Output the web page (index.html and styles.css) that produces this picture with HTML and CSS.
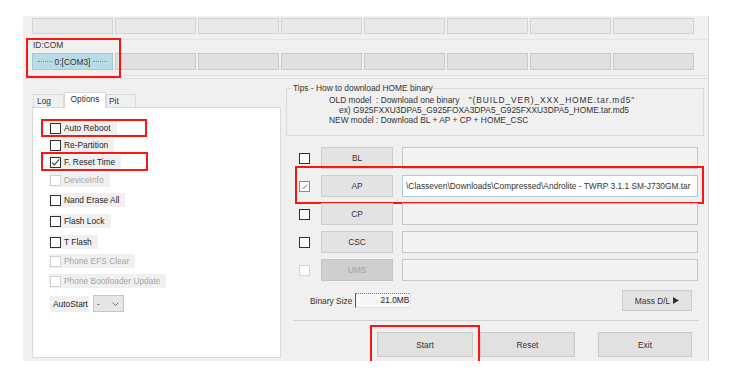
FILE: index.html
```html
<!DOCTYPE html>
<html>
<head>
<meta charset="utf-8">
<title>Odin</title>
<link rel="stylesheet" href="styles.css">
</head>
<body>
<div class="app">
  <div class="ports">
    <div class="slots top">
      <div class="slot"></div><div class="slot"></div><div class="slot"></div><div class="slot"></div>
      <div class="slot"></div><div class="slot"></div><div class="slot"></div><div class="slot"></div>
    </div>
    <div class="divider"></div>
    <div class="idcom">
      <div class="idlabel">ID:COM</div>
      <div class="slots bottom">
        <div class="slot com"><span>0:[COM3]</span></div>
        <div class="slot"></div><div class="slot"></div><div class="slot"></div>
        <div class="slot"></div><div class="slot"></div><div class="slot"></div><div class="slot"></div>
      </div>
      <div class="mark mark-id"></div>
    </div>
  </div>

  <div class="main">
    <div class="left">
      <div class="tabs">
        <div class="tab tab-log">Log</div>
        <div class="tab tab-options active">Options</div>
        <div class="tab tab-pit">Pit</div>
      </div>
      <div class="panel">
        <div class="opt"><span class="cb"></span><span>Auto Reboot</span><div class="mark mark-reboot"></div></div>
        <div class="opt"><span class="cb"></span><span>Re-Partition</span></div>
        <div class="opt"><span class="cb"><svg viewBox="0 0 9 9" width="9" height="9"><polyline points="1.2,4.6 3.4,7 8.2,1.4" fill="none" stroke="#333" stroke-width="1.1"/></svg></span><span>F. Reset Time</span><div class="mark mark-reset"></div></div>
        <div class="opt disabled"><span class="cb"></span><span>DeviceInfo</span></div>
        <div class="opt"><span class="cb"></span><span>Nand Erase All</span></div>
        <div class="opt"><span class="cb"></span><span>Flash Lock</span></div>
        <div class="opt"><span class="cb"></span><span>T Flash</span></div>
        <div class="opt disabled"><span class="cb"></span><span>Phone EFS Clear</span></div>
        <div class="opt disabled"><span class="cb"></span><span>Phone Bootloader Update</span></div>
        <div class="autostart">
          <span class="as-label">AutoStart</span>
          <div class="select"><span>-</span><svg width="7" height="4" viewBox="0 0 7 4"><polyline points="0.5,0.5 3.5,3.5 6.5,0.5" fill="none" stroke="#666" stroke-width="0.9"/></svg></div>
        </div>
      </div>
    </div>

    <div class="right">
      <fieldset class="tips">
        <legend>Tips - How to download HOME binary</legend>
        <div class="tips-lines">
          <div>OLD model  : Download one binary    <span class="quoted">"(BUILD_VER)_XXX_HOME.tar.md5"</span></div>
          <div class="ex">ex) G925FXXU3DPA5_G925FOXA3DPA5_G925FXXU3DPA5_HOME.tar.md5</div>
          <div>NEW model : Download BL + AP + CP + HOME_CSC</div>
        </div>
      </fieldset>

      <div class="files">
        <div class="frow"><span class="cb"></span><div class="fbtn">BL</div><div class="field"></div></div>
        <div class="frow"><span class="cb soft"><svg viewBox="0 0 9 9" width="7" height="7"><polyline points="1.2,4.8 3.4,7 8,2" fill="none" stroke="#555" stroke-width="1"/></svg></span><div class="fbtn">AP</div><div class="field focus">\Classeven\Downloads\Compressed\Androlite - TWRP 3.1.1 SM-J730GM.tar</div><div class="mark mark-ap"></div></div>
        <div class="frow"><span class="cb"></span><div class="fbtn">CP</div><div class="field"></div></div>
        <div class="frow"><span class="cb"></span><div class="fbtn">CSC</div><div class="field"></div></div>
        <div class="frow"><span class="cb off"></span><div class="fbtn off">UMS</div><div class="field"></div></div>
      </div>

      <div class="binrow">
        <span class="binlabel">Binary Size</span>
        <div class="binfield">21.0MB</div>
        <div class="massbtn">Mass D/L <svg width="6" height="7" viewBox="0 0 6 7"><polygon points="0,0 6,3.5 0,7" fill="#333"/></svg></div>
      </div>

      <div class="sep"></div>

      <div class="actions">
        <div class="abtn start">Start<div class="mark mark-start"></div></div>
        <div class="abtn reset">Reset</div>
        <div class="abtn exit">Exit</div>
      </div>
    </div>
  </div>
</div>
</body>
</html>
```

FILE: styles.css
```css
* { box-sizing: border-box; }
html, body { margin: 0; padding: 0; background: #fff; }
body {
  font-family: "Liberation Sans", Arial, sans-serif;
  font-size: 8.4px;
  color: #262626;
}

.app {
  margin: 16px 0 0 23px;
  width: 686px;
  height: 345px;
  background: #f0f0f0;
  border-right: 1px solid #d6d6d6;
}

/* ---------- port slots ---------- */
.ports {
  padding: 2px 0 5px 9px;
  border-bottom: 4px double #e1e1e1;
}
.slots { display: flex; gap: 2px; }
.slot {
  width: 81px;
  border: 1px solid #d3d3d3;
  background: #e9e9e9;
}
.slots.top .slot { height: 16px; }
.divider {
  margin: 5px 0 0 -7px;
  height: 1px;
  background: #e3e3e3;
}
.idcom { position: relative; }
.idlabel {
  height: 11px;
  line-height: 11px;
  margin-bottom: 2px;
  padding-left: 1px;
  color: #333;
}
.slots.bottom .slot {
  height: 17px;
  background: #e0e0e0;
  border-color: #cacaca;
}
.slots.bottom .slot.com {
  background: #b9dbe6;
  border-color: #a4c8d4;
  display: flex;
  align-items: center;
  gap: 3px;
  padding: 0 5px;
  color: #333;
  white-space: nowrap;
}
.slot.com::before,
.slot.com::after {
  content: "";
  flex: 1;
  border-top: 1px dotted #7c8e95;
}

/* ---------- red annotation boxes ---------- */
.mark {
  position: absolute;
  border: 2px solid #ff1414;
  pointer-events: none;
}
.mark-id { left: -6px; top: -2px; width: 95px; height: 40px; }
.mark-reboot { left: -8px; top: -2px; width: 106px; height: 18px; }
.mark-reset { left: -8px; top: -3px; width: 107px; height: 19px; }
.mark-ap { left: 9px; top: -9px; width: 409px; height: 38px; }
.mark-start { left: -8px; top: -8px; width: 110px; height: 38px; border-bottom: 0; }

/* ---------- main ---------- */
.main {
  display: flex;
  gap: 5px;
  padding-left: 9px;
}
.left { width: 249px; padding-top: 13px; }

.tabs {
  display: flex;
  align-items: flex-end;
  height: 15px;
  padding-left: 1px;
  position: relative;
  z-index: 1;
}
.tab {
  height: 13px;
  line-height: 12px;
  border: 1px solid #d9d9d9;
  border-bottom: 0;
  background: #f0f0f0;
  padding-left: 3px;
  color: #333;
}
.tab-log { width: 31px; }
.tab-pit { width: 30px; padding-left: 2px; }
.tab-options { width: 42px; text-align: center; padding-left: 0; }
.tab.active {
  height: 16px;
  line-height: 13px;
  margin-bottom: -1px;
  background: #fff;
}

.panel {
  height: 251px;
  border: 1px solid #d9d9d9;
  background: #fff;
  padding: 13px 0 0 16px;
  display: grid;
  grid-template-rows: 17px 17px 18px 20px 21px 21px 19px 20px 21px auto;
  align-items: start;
  justify-items: start;
}
.opt {
  position: relative;
  display: flex;
  align-items: center;
  gap: 3px;
  height: 14px;
  padding: 0 6px 0 1px;
  background: #f0f0f0;
  white-space: nowrap;
}
.cb {
  width: 11px;
  height: 11px;
  flex: none;
  border: 1px solid #333;
  background: #fff;
  display: flex;
  align-items: center;
  justify-content: center;
}
.opt.disabled { color: #a6a6a6; }
.opt.disabled .cb { border-color: #d2d2d2; }

.autostart {
  display: flex;
  align-items: center;
  gap: 4px;
  margin-left: 1px;
}
.as-label {
  height: 16px;
  line-height: 16px;
  padding: 0 1px 0 3px;
  background: #f0f0f0;
}
.select {
  width: 31px;
  height: 17px;
  border: 1px solid #c6c6c6;
  background: #e6e6e6;
  display: flex;
  align-items: center;
  justify-content: space-between;
  padding: 0 4px 0 3px;
  color: #555;
}

/* ---------- right column ---------- */
.right { flex: 1; padding-top: 4px; }

.tips {
  margin: 0;
  width: 418px;
  min-width: 0;
  border: 1px solid #d9d9d9;
  padding: 2px 0 10px 5px;
}
.tips legend {
  padding: 0 1px;
  line-height: 10px;
  color: #333;
}
.tips-lines { padding-left: 37px; color: #333; }
.tips-lines div { line-height: 10px; white-space: pre; }
.tips-lines .ex { padding-left: 10px; }
.tips-lines .quoted { letter-spacing: 0.9px; }

.files {
  margin-top: 11px;
  display: grid;
  row-gap: 6px;
}
.frow {
  position: relative;
  display: flex;
  align-items: center;
  height: 22px;
  padding: 0 10px 0 13px;
}
.frow .cb { margin-right: 11px; }
.cb.soft { border-color: #8c8c8c; }
.cb.off { border-color: #d4d4d4; }
.fbtn {
  width: 72px;
  height: 22px;
  margin-right: 9px;
  background: #e3e3e3;
  border: 1px solid #cdcdcd;
  display: flex;
  align-items: center;
  justify-content: center;
  color: #333;
}
.fbtn.off {
  background: #cfcfcf;
  border-color: #c4c4c4;
  color: #a4a4a4;
}
.field {
  flex: 1;
  height: 22px;
  border: 1px solid #c6c6c6;
  background: #f3f3f3;
}
.field.focus {
  background: #fff;
  border-color: #a8cde4;
  display: flex;
  align-items: center;
  padding-left: 3px;
  overflow: hidden;
  white-space: nowrap;
  color: #333;
}

.binrow {
  display: flex;
  align-items: center;
  height: 21px;
  margin-top: 9px;
  padding: 0 16px 0 24px;
}
.binlabel { margin-right: 3px; color: #333; }
.binfield {
  width: 56px;
  height: 15px;
  line-height: 13px;
  text-align: right;
  padding-right: 1px;
  background: #f7f7f7;
  border-top: 1px dotted #777;
  border-left: 1px solid #555;
  border-right: 1px dotted #cfcfcf;
  border-bottom: 1px dotted #d6d6d6;
}
.massbtn {
  margin-left: auto;
  width: 70px;
  height: 21px;
  background: #e3e3e3;
  border: 1px solid #cdcdcd;
  display: flex;
  align-items: center;
  justify-content: center;
  gap: 3px;
  color: #333;
}

.sep {
  margin: 9px 9px 0 7px;
  border-top: 1px solid #d2d2d2;
}

.actions {
  display: flex;
  gap: 7px;
  margin-top: 11px;
  padding-left: 91px;
}
.abtn {
  position: relative;
  height: 25px;
  background: #e1e1e1;
  border: 1px solid #cacaca;
  display: flex;
  align-items: center;
  justify-content: center;
  color: #333;
}
.abtn.start { width: 96px; }
.abtn.reset { width: 95px; }
.abtn.exit { width: 94px; margin-left: 16px; }
```
